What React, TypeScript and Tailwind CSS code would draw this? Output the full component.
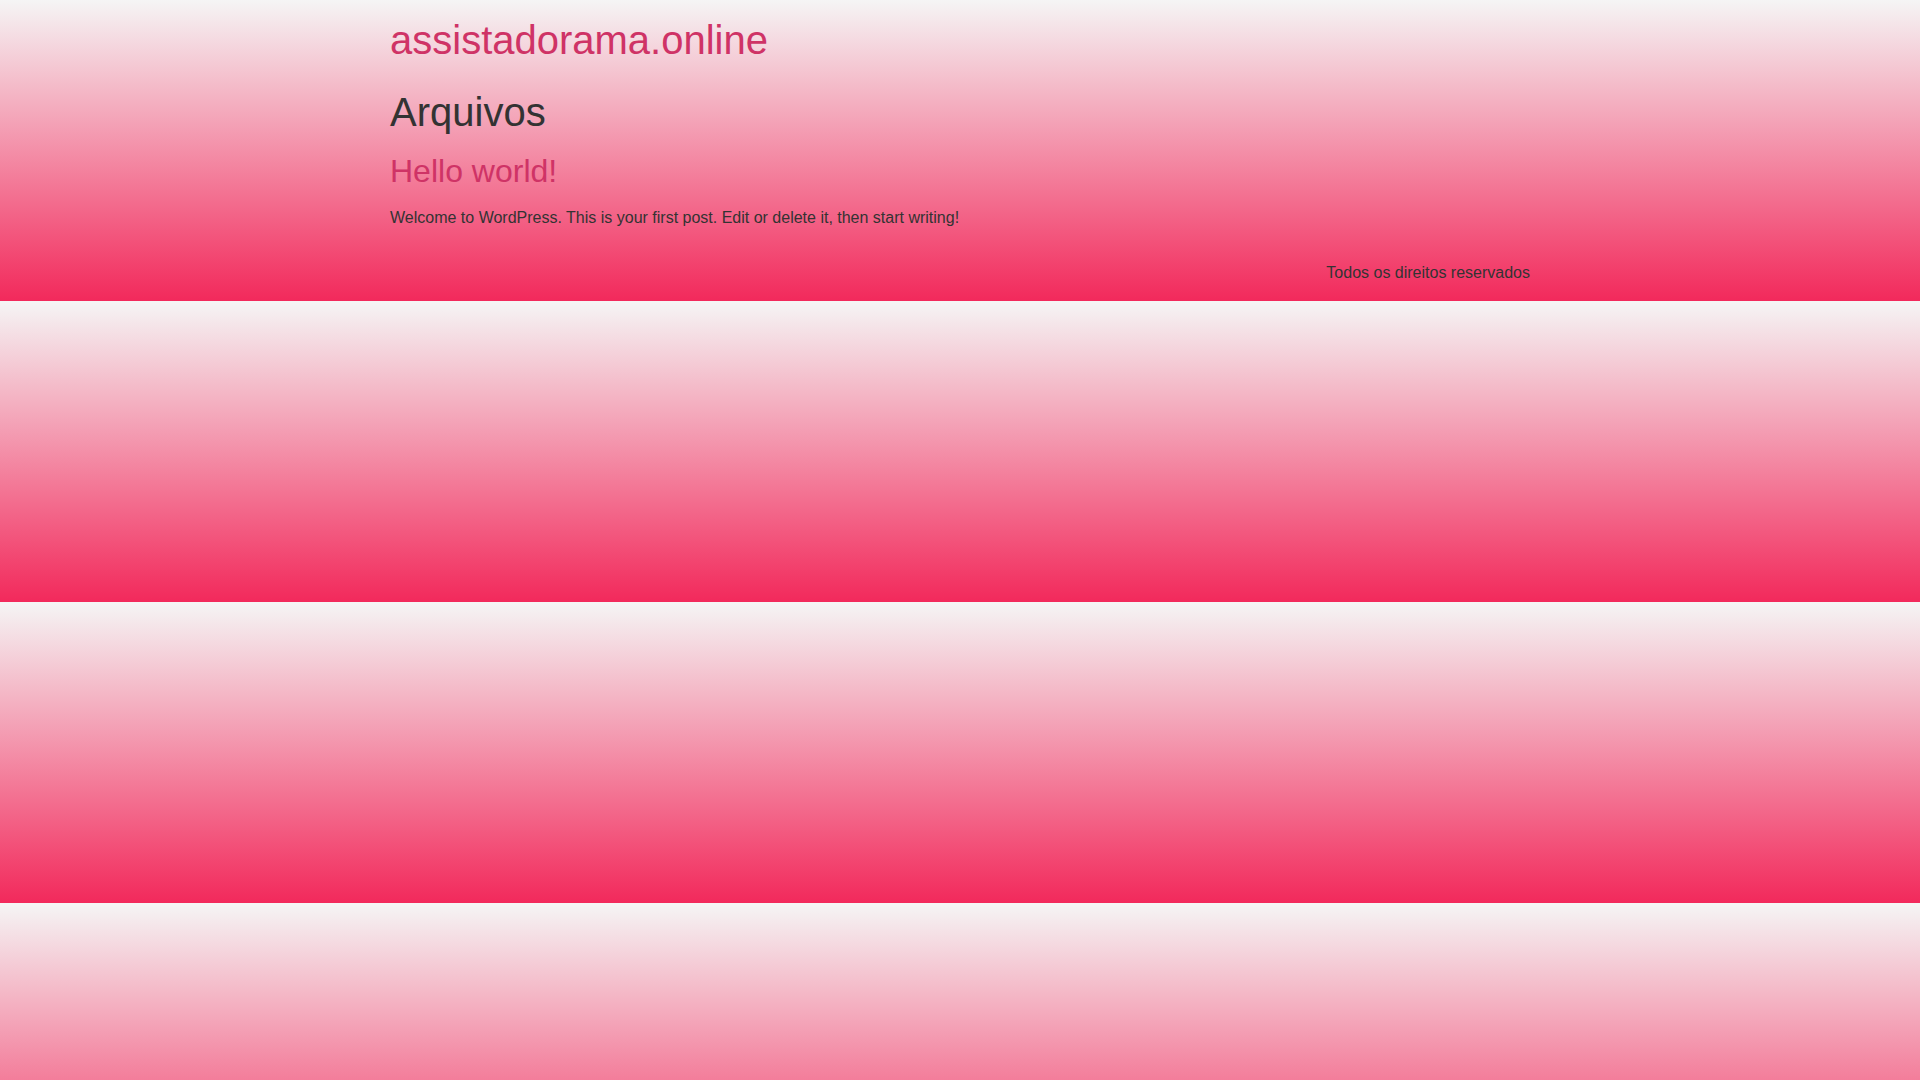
import React from 'react';

export default function App() {
  return (
    <div
      className="min-h-screen bg-[linear-gradient(to_bottom,#f5f5f5,#f2295b)] bg-size-[100%_301px] bg-repeat text-[#333333]"
      style={{ fontFamily: '"Liberation Sans", Arial, sans-serif' }}
    >
      <div className="mx-auto w-[1170px] px-[15px]">
        <header>
          <h1 className="pt-[18px] text-[40px] leading-[1.1] text-[#cf3366]">
            <a href="#">assistadorama.online</a>
          </h1>
        </header>

        <main>
          <h1 className="mt-[28px] text-[40px] leading-[1.1]">Arquivos</h1>
          <article>
            <h2 className="mt-[20px] text-[32px] leading-[1.1] text-[#cf3366]">
              <a href="#">Hello world!</a>
            </h2>
            <p className="mt-[19px] text-base leading-[20px]">
              Welcome to WordPress. This is your first post. Edit or delete it,
              then start writing!
            </p>
          </article>
        </main>

        <footer className="flex justify-end pt-[35px] pb-[17px]">
          <p className="text-base leading-[20px]">Todos os direitos reservados</p>
        </footer>
      </div>
    </div>
  );
}
